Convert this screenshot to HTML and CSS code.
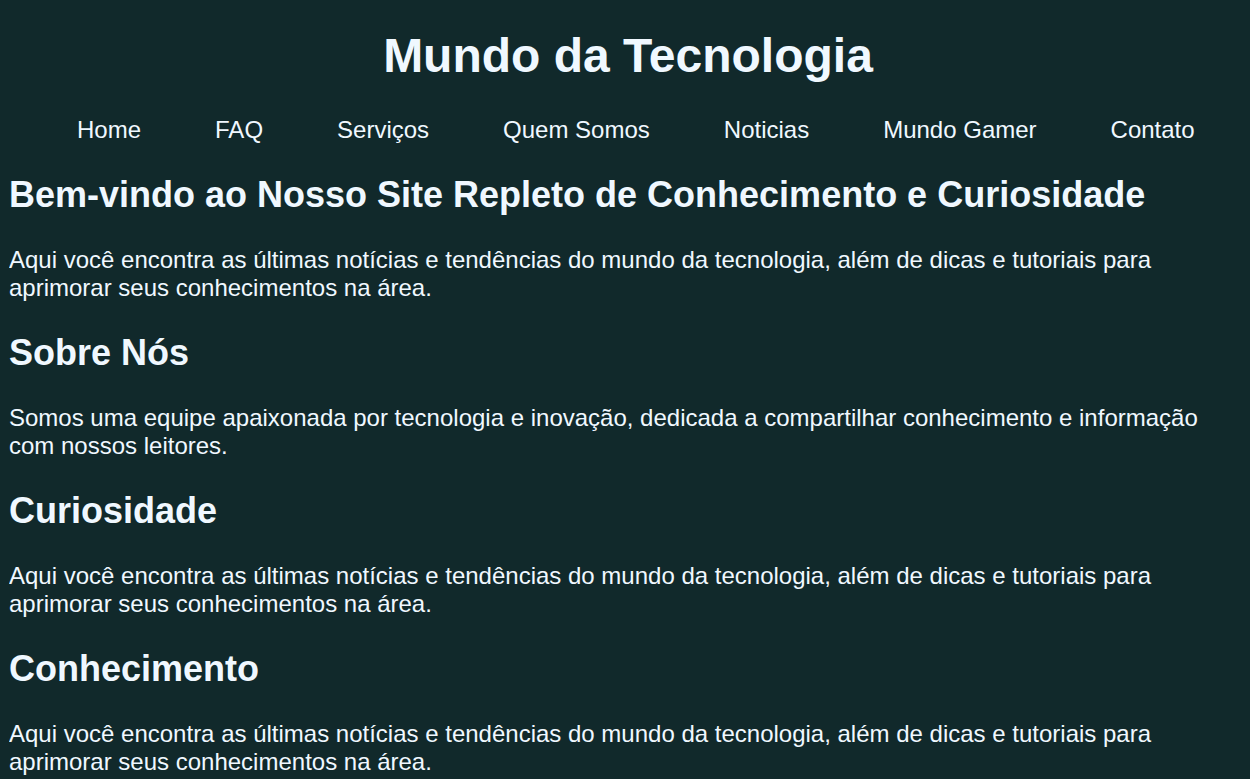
FILE: index.html
```html
<!DOCTYPE html>
<html lang="pt-BR">
<head>
<meta charset="utf-8">
<title>Mundo da Tecnologia</title>
<link rel="stylesheet" href="styles.css">
</head>
<body>
<header class="site-header">
  <h1 class="site-title">Mundo da Tecnologia</h1>
  <nav class="site-nav">
    <ul class="nav-list">
      <li><a href="#">Home</a></li>
      <li><a href="#">FAQ</a></li>
      <li><a href="#">Serviços</a></li>
      <li><a href="#">Quem Somos</a></li>
      <li><a href="#">Noticias</a></li>
      <li><a href="#">Mundo Gamer</a></li>
      <li><a href="#">Contato</a></li>
    </ul>
  </nav>
</header>
<main class="content">
  <section class="section">
    <h2>Bem-vindo ao Nosso Site Repleto de Conhecimento e Curiosidade</h2>
    <p>Aqui você encontra as últimas notícias e tendências do mundo da tecnologia, além de dicas e tutoriais para aprimorar seus conhecimentos na área.</p>
  </section>
  <section class="section">
    <h2>Sobre Nós</h2>
    <p>Somos uma equipe apaixonada por tecnologia e inovação, dedicada a compartilhar conhecimento e informação com nossos leitores.</p>
  </section>
  <section class="section">
    <h2>Curiosidade</h2>
    <p>Aqui você encontra as últimas notícias e tendências do mundo da tecnologia, além de dicas e tutoriais para aprimorar seus conhecimentos na área.</p>
  </section>
  <section class="section">
    <h2>Conhecimento</h2>
    <p>Aqui você encontra as últimas notícias e tendências do mundo da tecnologia, além de dicas e tutoriais para aprimorar seus conhecimentos na área.</p>
  </section>
</main>
</body>
</html>
```

FILE: styles.css
```css
html {
  background: #11292b;
}

body {
  margin: 8px 9px;
  background: #11292b;
  color: #f0f8ff;
  font-family: "Liberation Sans", Arial, sans-serif;
  font-size: 24px;
}

.site-title {
  text-align: center;
  font-size: 48px;
  font-weight: bold;
  margin: 20px 0 33px;
  padding-left: 6px;
}

.nav-list {
  list-style: none;
  display: flex;
  justify-content: flex-start;
  gap: 74px;
  margin: 24px 0;
  padding: 0 0 0 68px;
}

.nav-list a {
  color: #f0f8ff;
  text-decoration: none;
}

.section h2 {
  font-size: 36px;
  font-weight: bold;
  margin: 30px 0;
}

.section p {
  margin: 24px 0;
}
```
